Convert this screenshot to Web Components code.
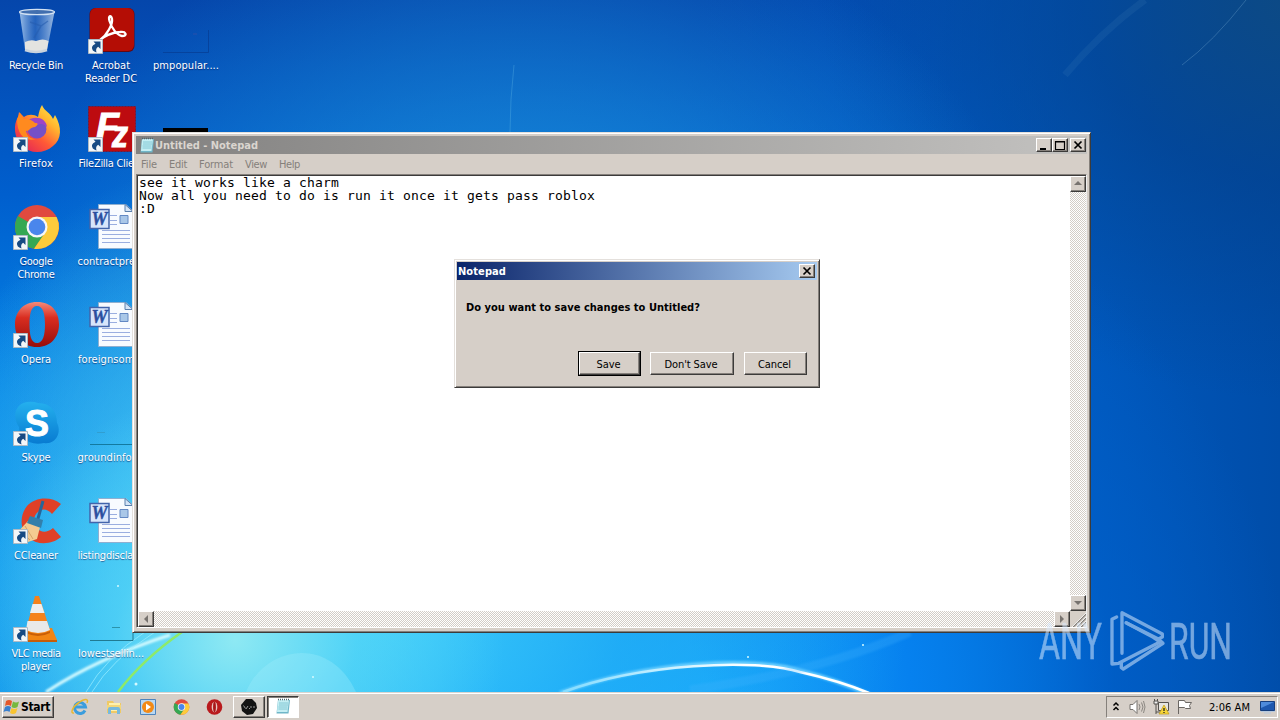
<!DOCTYPE html>
<html lang="en">
<head>
<meta charset="utf-8">
<title>Desktop</title>
<style>
    body {
        margin: 0;
        width: 1280px;
        height: 720px;
        overflow: hidden;
        position: relative;
        font: 11px/13px "DejaVu Sans Condensed", "DejaVu Sans", sans-serif;
        --face: #d6cfc8;
        --light: #fff;
        --shadow: #85807b;
        --dark: #3c3b3a;
    }
</style>
</head>
<body>
<desk-wallpaper></desk-wallpaper>
<desk-icons></desk-icons>
<note-window></note-window>
<save-dialog></save-dialog>
<any-run></any-run>
<task-bar></task-bar>

<script>
const ARROW = `<g class="arrow"><path d="M.5 31.5h14v14H.5z" fill="#f3f6f8" stroke="#aebac5"/>
    <path d="M5.500 33.500h7v7.500l-2.300-2.300q-3 1.500-1.700 5.800q-5-1.500-4.500-5.500q.5-2 3.500-3.300z" fill="#174a83"/></g>`;

const CHROME = `<circle cx="24" cy="24" r="22" fill="#e04a3f"/>
    <path d="M24 24L4.900 13A22 22 0 0 0 21 45.800L33 29z" fill="#35a853"/>
    <path d="M24 14h19.600A22 22 0 0 1 21 45.800L32.500 29z" fill="#fdcb3c"/>
    <circle cx="24" cy="24" r="10.500" fill="#f7f7f7"/><circle cx="24" cy="24" r="8.300" fill="#4a86ec"/>`;

const NOTE = `<path d="M3 2h12l-1.500 13.500H1.500z" fill="#6fb6c8"/><path d="M3 2h11l-1.500 12H2z" fill="#c4eef3"/>
    <path d="M4 5h9M4 7h9M3.500 9h9M3.500 11h9" stroke="#75bccb" stroke-width=".8"/>
    <path d="M3 1.500h12" stroke="#4d686f" stroke-width="1.500" stroke-dasharray="1 1"/>`;

const WORD = `<path d="M10.500.500H38l7 7V44.500H10.500z" fill="#f8fbff" stroke="#8fafd0"/>
    <path d="M37 .500v7h8z" fill="#d4e4f6" stroke="#5b80ad"/>
    <path d="M22 11.500h7M22 16.500h7M22 20.500h7M14 26.500h28M14 30.500h28M14 34.500h28M14 38.500h28" stroke="#9aaee0"/>
    <path d="M32 11.500h8v8h-8z" fill="#a9c7e8" stroke="#6388c3"/>
    <path d="M2 5.500h19v19H2z" fill="#d7e5fb" stroke="#4264ab" stroke-width="1.500"/>
    <text x="3.500" y="21" font-family="Liberation Serif, serif" font-weight="bold" font-style="italic" font-size="18" textLength="16" lengthAdjust="spacingAndGlyphs" fill="#2b4f9f" stroke="#2b4f9f" stroke-width=".4">W</text>`;

const OPERA = `<defs><linearGradient id="op" x2="0" y2="1"><stop stop-color="#f58a79"/><stop offset=".35" stop-color="#d92d20"/><stop offset="1" stop-color="#970d0b"/></linearGradient></defs>
    <path fill-rule="evenodd" d="M24 0C39 0 46 10 46 22.500S38 45 24 45S2 35 2 22.500S10 0 24 0zM24 4C18 4 16.500 12 16.500 22.500S18 41 24 41s8-8 8-18.500S30 4 24 4z" fill="url(#op)"/>`;

const ICONS = {
    bin: `<defs><linearGradient id="b"><stop stop-color="#b5d2f1" stop-opacity=".85"/><stop offset=".45" stop-color="#4c82cd" stop-opacity=".45"/><stop offset="1" stop-color="#c0d6ee" stop-opacity=".8"/></linearGradient></defs>
        <path d="M6.500 4L12 42q12 4.500 22 0L41.500 4z" fill="url(#b)"/>
        <path d="M12 34q6-3 11-1q7-3 12.500 0L34 42q-10 4.500-22 0z" fill="#e3e3e0"/>
        <path d="M12 42q11 4 22 0" stroke="#c9d3dd" stroke-width="2.500" fill="none"/>
        <ellipse cx="24" cy="4" rx="17.500" ry="2.700" fill="#426faf" stroke="#d3e2f3" stroke-width="1.300"/>
        <path d="M17 14l11 4-7 12M28 18l7-5" stroke="#275daf" stroke-width="1.500" fill="none" opacity=".6"/>`,
    acrobat: `<rect x="1.500" width="45" height="44" rx="6" fill="#620915"/><rect x="2" width="44" height="43" rx="6" fill="#b40d05"/>
        <path d="M12 32C19 27 25 16 24 11C23 6 20 8 21.500 13C24 21 29 27 34 28C40 28 38 23 32 24C24 24 15 29 12 32z" fill="none" stroke="#fff" stroke-width="2.300" stroke-linejoin="round"/>` + ARROW,
    firefox: `<defs><linearGradient id="ff" x1="1" y1="0" x2=".2" y2="1"><stop stop-color="#fff44f"/><stop offset=".35" stop-color="#ffb52e"/><stop offset=".65" stop-color="#ff5a36"/><stop offset="1" stop-color="#e22458"/></linearGradient></defs>
        <path d="M29-1c2 6 9 8 11 14l2-4c7 12 7 24-2 31c-9 8-23 8-31 0C1 32 0 19 5 11l1-5l5 5c4-3 10-3 14 0c1-5 2-9 4-12z" fill="url(#ff)"/>
        <circle cx="24" cy="23" r="9.500" fill="#7550c7"/><path d="M17 13c8-3 16 0 17 8c-4-4-8-4-12 0c-7 0-9 3-7 7c-7-5-5-12 2-15z" fill="#9e44c5"/>
        <path d="M4 13l3-6l4 6c4-1 8 1 11 4c4 0 3 2 0 4c-5 0-5 4-9 4c1 6 5 8 10 8C12 36 4 29 4 13z" fill="#ff8a1f"/>` + ARROW,
    filezilla: `<rect x=".5" y=".5" width="47" height="45" fill="#bd0b10" stroke="#7c1731" stroke-dasharray="2 1"/>
        <g fill="#fff" stroke="#fff" font-family="Liberation Sans, sans-serif" font-weight="bold" font-style="italic"><text x="8" y="33" font-size="37" textLength="23" lengthAdjust="spacingAndGlyphs">F</text><text x="24" y="41" font-size="36" textLength="16" lengthAdjust="spacingAndGlyphs">z</text></g>` + ARROW,
    chrome: `<g transform="translate(0 -1)">${CHROME}</g>` + ARROW,
    opera: OPERA + ARROW,
    skype: `<defs><linearGradient id="sk" x2="0" y2="1"><stop stop-color="#24b0ee"/><stop offset="1" stop-color="#087bd1"/></linearGradient></defs>
        <path d="M14 2q6-1 11 1c13 0 19 9 19 20c5 9-1 22-13 20C16 46 6 38 6 27C-1 16 2 4 14 2z" fill="url(#sk)"/>
        <text x="12" y="36" font-family="Liberation Sans, sans-serif" font-weight="bold" font-size="37" textLength="24" lengthAdjust="spacingAndGlyphs" fill="#fff" stroke="#fff">S</text>` + ARROW,
    ccleaner: `<path d="M48 6C38-2 22-1 14 8c-8 10-7 25 2 32c9 8 24 6 32-1l-8-9c-6 5-12 5-16 0c-5-6-3-13 1-16c4-4 10-3 14 2z" fill="#df4027"/>
        <path d="M15 23l12 6-3 12-9 3L1 38z" fill="#f4ca91"/><path d="M7 33l10 9M12 28l8 13" stroke="#d6a368"/>
        <path d="M30 3L24 24" stroke="#26669a" stroke-width="3"/><path d="M17 18l13 4-2 8-14-5z" fill="#337faa"/>` + ARROW,
    vlc: `<path d="M12 32h27l5 12H4z" fill="#f18514"/><path d="M4 44h40v2H4z" fill="#c65d08"/>
        <path d="M22 0h4l11 34q-12 7-24 0z" fill="#f5821b"/><path d="M19.500 8h9l3 9H17z" fill="#eee"/><path d="M14.500 25h19.500l3 9q-12 6-24 0z" fill="#e9e9e9"/><path d="M13 35q12 6 24 0v2q-12 6-24 0z" fill="#c95e07"/>` + ARROW,
    word: WORD,
    faint: `<path d="M0 44.500h45.500V22" fill="none" stroke="#053c92" opacity=".7"/><path d="M30 26h4" stroke="#51509f" opacity=".5"/>`,
    black: `<path d="M0 22h45v20H0z" fill="#000"/>`,
    line1: `<path d="M2 44.500h46" stroke="#137aa0"/><path d="M9 32.500h8" stroke="#3294be" opacity=".6"/>`,
    line2: `<path d="M2 44.500h43V30" stroke="#207a92" fill="none"/><path d="M24 31.500h8" stroke="#2b93ab"/>`
};

class DeskWallpaper extends HTMLElement {
    connectedCallback() {
        this.attachShadow({ mode: 'open' }).innerHTML = `
        <style>
            :host {
                position: absolute;
                inset: 0;
                background:
                    radial-gradient(ellipse 270px 250px at 235px 640px, #8ee9f3, #57d7f6b0 45%, #2fbcf700),
                    radial-gradient(ellipse 250px 330px at 190px 500px, #4fcdf5c0, #2fb8f300),
                    radial-gradient(ellipse 560px 400px at 350px 600px, #3bcafa 10%, #25b5f999 50%, #0a90f000),
                    radial-gradient(ellipse 520px 420px at 520px 320px, #2c9ee6, #1888d7b0 45%, #0c6fca00),
                    radial-gradient(ellipse 730px 620px at 560px 700px, #16a5fb 20%, #0681ef 48%, #0062ce90 76%, #005bc400),
                    radial-gradient(ellipse 480px 400px at 1300px 0, #0d4a84, #04408aa0 45%, #0040a000),
                    linear-gradient(90deg, #0048ac00 55%, #0058bd 85%, #004da9 100%),
                    linear-gradient(#0546ab, #005fce 27%, #0587e8 55%, #009ff6 80%, #00a6f9);
            }
            svg { display: block; }
        </style>
        <svg width="1280" height="720" fill="none">
            <defs><filter id="soft" x="-20%" y="-20%" width="140%" height="140%"><feGaussianBlur stdDeviation="1.200"/></filter>
            <linearGradient id="arc"><stop stop-color="#83dcff"/><stop offset=".6" stop-color="#fff"/><stop offset="1" stop-color="#fff"/></linearGradient></defs>
            <path d="M246 692C265 645 330 635 356 692z" fill="#a4f0fb" opacity=".3"/>
            <path d="M46 692Q98 658 170 635" stroke="#d5fbff" stroke-width="3" filter="url(#soft)"/>
            <path d="M86 692Q106 657 145 632M92 692Q111 660 155 632" stroke="#9deeff" opacity=".7"/>
            <path d="M118 692Q143 659 182 632" stroke="#8eea68" stroke-width="2.500"/>
            <path d="M560 693C650 660 760 656 805 672C830 678 852 687 870 695" stroke="#6acfff" stroke-width="4" filter="url(#soft)"/>
            <path d="M563 692C640 664 755 658 800 672Q840 681 869 693" stroke="url(#arc)" stroke-width="2.500"/>
            <path d="M690 690Q820 672 910 632" stroke="#47b5ff" stroke-width="9" opacity=".25" filter="url(#soft)"/>
            <path d="M1246 0Q1213 42 1182 65" stroke="#72a5cf" opacity=".35"/>
            <path d="M1145 0Q1103 30 1065 75" stroke="#5c91c4" stroke-width="7" opacity=".12"/>
            <path d="M514 65Q510 100 510 132" stroke="#6bc1e7" opacity=".3"/>
            <g fill="#d5faff"><circle cx="101" cy="560" r="1.300"/><circle cx="118" cy="586" r="1"/><circle cx="136" cy="684" r="1.500"/><circle cx="313" cy="677" r="1"/><circle cx="748" cy="657" r="1"/><circle cx="863" cy="645" r="1"/></g>
        </svg>`;
    }
}
customElements.define('desk-wallpaper', DeskWallpaper);


class DeskIcon extends HTMLElement {
    connectedCallback() {
        this.attachShadow({ mode: 'open' }).innerHTML = `
        <style>
            :host {
                display: flex;
                flex-direction: column;
                align-items: center;
                gap: 3px;
                padding-top: 8px;
                color: #fff;
                text-shadow: 0 1px 1px #0048;
            }
            svg { display: block; overflow: visible; flex: none; text-shadow: none; }
            div { padding-right: 2px; text-align: center; white-space: nowrap; }
        </style>
        <svg width="48" height="48">${ICONS[this.getAttribute('icon')]}</svg>
        <div><slot></slot></div>`;
    }
}
customElements.define('desk-icon', DeskIcon);


class DeskIcons extends HTMLElement {
    connectedCallback() {
        this.attachShadow({ mode: 'open' }).innerHTML = `
        <style>
            :host {
                position: relative;
                display: grid;
                grid-template-columns: repeat(3, 74px);
                grid-template-rows: repeat(7, 98px);
                grid-auto-flow: column;
                column-gap: 1px;
            }
        </style>
        <desk-icon icon="bin"><fit-text w="54">Recycle Bin</fit-text></desk-icon>
        <desk-icon icon="firefox"><fit-text w="34">Firefox</fit-text></desk-icon>
        <desk-icon icon="chrome"><fit-text w="33">Google</fit-text><br><fit-text w="37">Chrome</fit-text></desk-icon>
        <desk-icon icon="opera"><fit-text w="30">Opera</fit-text></desk-icon>
        <desk-icon icon="skype"><fit-text w="29">Skype</fit-text></desk-icon>
        <desk-icon icon="ccleaner"><fit-text w="44">CCleaner</fit-text></desk-icon>
        <desk-icon icon="vlc"><fit-text w="49">VLC media</fit-text><br><fit-text w="30">player</fit-text></desk-icon>
        <desk-icon icon="acrobat"><fit-text w="38">Acrobat</fit-text><br><fit-text w="52">Reader DC</fit-text></desk-icon>
        <desk-icon icon="filezilla"><fit-text w="65">FileZilla Client</fit-text></desk-icon>
        <desk-icon icon="word"><fit-text w="67">contractpre...</fit-text></desk-icon>
        <desk-icon icon="word"><fit-text w="66">foreignsom...</fit-text></desk-icon>
        <desk-icon icon="line1"><fit-text w="67">groundinfor...</fit-text></desk-icon>
        <desk-icon icon="word"><fit-text w="67">listingdisclai...</fit-text></desk-icon>
        <desk-icon icon="line2"><fit-text w="66">lowestsellin...</fit-text></desk-icon>
        <desk-icon icon="faint"><fit-text w="66">pmpopular....</fit-text></desk-icon>
        <desk-icon icon="black"></desk-icon>`;
    }
}
customElements.define('desk-icons', DeskIcons);


// Raised square button used in captions and scroll bars
class GlyphButton extends HTMLElement {
    connectedCallback() {
        const glyphs = {
            min: '<path d="M3 10h6" stroke-width="2"/>',
            max: '<path d="M2.500 2.500h9v8h-9zM2 3h10" stroke-width="1.200"/>',
            close: '<path d="M3.500 2.500l7 7M10.500 2.500l-7 7" stroke-width="1.700"/>',
            up: '<path d="M3 8h8L7 4z" fill="#77736f" stroke="none"/>',
            down: '<path d="M3 5h8L7 9z" fill="#77736f" stroke="none"/>',
            left: '<path d="M9 3v8L5 7z" fill="#77736f" stroke="none"/>',
            right: '<path d="M5 3v8l4-4z" fill="#77736f" stroke="none"/>'
        };
        this.attachShadow({ mode: 'open' }).innerHTML = `
        <style>
            :host {
                display: block;
                box-sizing: border-box;
                width: 16px;
                height: 14px;
                background: var(--face);
                border: 1px solid;
                border-color: var(--light) var(--dark) var(--dark) var(--light);
                box-shadow: inset -1px -1px var(--shadow);
            }
            svg { display: block; overflow: visible; }
        </style>
        <svg width="13" height="12" fill="none" stroke="#000">${glyphs[this.getAttribute('glyph')]}</svg>`;
    }
}
customElements.define('glyph-button', GlyphButton);


class NoteWindow extends HTMLElement {
    connectedCallback() {
        this.attachShadow({ mode: 'open' }).innerHTML = `
        <style>
            :host {
                position: absolute;
                left: 132px;
                top: 132px;
                width: 959px;
                height: 501px;
                box-sizing: border-box;
                display: flex;
                flex-direction: column;
                padding: 3px;
                background: var(--face);
                border: 1px solid;
                border-color: #e4e0dc var(--dark) var(--dark) #e4e0dc;
                box-shadow: inset 1px 1px #fff, inset -1px -1px var(--shadow);
            }
            .title {
                display: flex;
                align-items: center;
                height: 18px;
                padding: 0 1px 0 3px;
                background: linear-gradient(90deg, #828180, #c3c2c0);
                color: #dad5cf;
                font-weight: bold;
            }
            .buttons { display: flex; margin-left: auto; }
            .buttons glyph-button:last-child { margin-left: 2px; }
            .menu {
                display: flex;
                align-items: center;
                gap: 12px;
                height: 20px;
                padding: 0 0 0 5px;
                color: #85807b;
            }
            .edit {
                flex: 1;
                display: grid;
                grid-template-columns: 1fr 16px;
                grid-template-rows: 1fr 16px;
                background: #fff;
                border: 1px solid;
                border-color: var(--shadow) #eee var(--light) var(--shadow);
                box-shadow: inset 1px 1px var(--dark);
                padding: 1px 0 0 1px;
                margin-bottom: 1px;
            }
            .text {
                font: 13px/13px "DejaVu Sans Mono", monospace;
                padding-left: 1px;
            }
            .text fit-text { display: block; width: max-content; }
            .bar {
                display: flex;
                justify-content: space-between;
                background: repeating-conic-gradient(#fff 0 25%, #d3cdc6 0 50%) 0 0 / 2px 2px;
            }
            .bar glyph-button { height: 16px; }
            .v { flex-direction: column; }
            .grip { background: var(--face); }
        </style>
        <div class="title">
            <svg width="16" height="16">${NOTE}</svg>
            <fit-text w="103">Untitled - Notepad</fit-text>
            <div class="buttons"><glyph-button glyph="min"></glyph-button><glyph-button glyph="max"></glyph-button><glyph-button glyph="close"></glyph-button></div>
        </div>
        <div class="menu"><fit-text w="16">File</fit-text><fit-text w="18">Edit</fit-text><fit-text w="34">Format</fit-text><fit-text w="22">View</fit-text><fit-text w="21">Help</fit-text></div>
        <div class="edit">
            <div class="text">
                <fit-text w="200">see it works like a charm</fit-text>
                <fit-text w="456">Now all you need to do is run it once it gets pass roblox</fit-text>
                <fit-text w="16">:D</fit-text>
            </div>
            <div class="bar v"><glyph-button glyph="up"></glyph-button><glyph-button glyph="down"></glyph-button></div>
            <div class="bar"><glyph-button glyph="left"></glyph-button><glyph-button glyph="right"></glyph-button></div>
            <svg class="grip" width="16" height="16"><path d="M3 16L16 3M7 16l9-9M11 16l5-5" stroke="#85807b" stroke-width="1.500"/><path d="M2 16L16 2M6 16L16 6M10 16l6-6" stroke="#fff" stroke-width=".8"/></svg>
        </div>`;
    }
}
customElements.define('note-window', NoteWindow);


class PushButton extends HTMLElement {
    connectedCallback() {
        this.attachShadow({ mode: 'open' }).innerHTML = `
        <style>
            :host {
                display: flex;
                box-sizing: border-box;
                align-items: center;
                justify-content: center;
                height: 23px;
                padding: 1px 2px 0 0;
                border: 1px solid;
                border-color: var(--light) var(--dark) var(--dark) var(--light);
                box-shadow: inset -1px -1px var(--shadow);
            }
            :host([default]) {
                outline: 1px solid #000;
                outline-offset: 0;
            }
        </style>
        <slot></slot>`;
    }
}
customElements.define('push-button', PushButton);


class SaveDialog extends HTMLElement {
    connectedCallback() {
        this.attachShadow({ mode: 'open' }).innerHTML = `
        <style>
            :host {
                position: absolute;
                left: 454px;
                top: 259px;
                width: 366px;
                height: 129px;
                box-sizing: border-box;
                display: flex;
                flex-direction: column;
                padding: 2px;
                background: var(--face);
                border: 1px solid;
                border-color: #e4e0dc var(--dark) var(--dark) #e4e0dc;
                box-shadow: inset 1px 1px #fff, inset -1px -1px var(--shadow);
            }
            .title {
                display: flex;
                align-items: center;
                justify-content: space-between;
                height: 18px;
                padding: 0 2px 0 1px;
                background: linear-gradient(90deg, #0a246a, #a6caf0);
                color: #fff;
                font-weight: bold;
            }
            .message {
                padding: 21px 0 0 9px;
                font-weight: bold;
            }
            .buttons {
                display: flex;
                justify-content: flex-end;
                gap: 10px;
                margin-top: auto;
                padding: 0 10px 10px 0;
            }
        </style>
        <div class="title"><fit-text w="48">Notepad</fit-text><glyph-button glyph="close"></glyph-button></div>
        <div class="message"><fit-text w="234">Do you want to save changes to Untitled?</fit-text></div>
        <div class="buttons">
            <push-button default style="width:61px"><fit-text w="24">Save</fit-text></push-button>
            <push-button style="width:84px"><fit-text w="53">Don't Save</fit-text></push-button>
            <push-button style="width:63px"><fit-text w="33">Cancel</fit-text></push-button>
        </div>`;
    }
}
customElements.define('save-dialog', SaveDialog);


class AnyRun extends HTMLElement {
    connectedCallback() {
        this.attachShadow({ mode: 'open' }).innerHTML = `
        <style>
            :host { position: absolute; left: 1030px; top: 600px; opacity: .53; }
            svg { display: block; overflow: visible; }
        </style>
        <svg width="220" height="85" viewBox="1030 600 220 85" fill="#dcecff">
            <g font-family="Roboto, sans-serif" font-size="50" stroke="#dcecff" stroke-width=".5">
                <text x="1039" y="659" textLength="63" lengthAdjust="spacingAndGlyphs">ANY</text>
                <text x="1169" y="659" textLength="63" lengthAdjust="spacingAndGlyphs">RUN</text>
            </g>
            <g transform="translate(1000 590) scale(.3333)" fill="none" stroke="#dcecff" stroke-width="10" stroke-linejoin="round" stroke-linecap="round">
                <path d="M350 81l-14 7v134l20-2 124-64-20-14-82-44"/>
                <path d="M366 190V68l121 64v9l-12 6-95-48"/>
                <path d="M475 147l14 13-119 77-6-4v-13"/>
            </g>
        </svg>`;
    }
}
customElements.define('any-run', AnyRun);


class TaskBar extends HTMLElement {
    connectedCallback() {
        this.attachShadow({ mode: 'open' }).innerHTML = `
        <style>
            :host {
                position: absolute;
                left: 0;
                top: 692px;
                width: 1280px;
                height: 28px;
                box-sizing: border-box;
                display: flex;
                align-items: center;
                padding: 2px 2px 2px;
                background: var(--face);
                border-top: 1px solid #d9d5d0;
                box-shadow: inset 0 1px #fff;
            }
            svg { display: block; overflow: visible; flex: none; }
            .start, .task {
                box-sizing: border-box;
                display: flex;
                align-items: center;
                height: 22px;
                border: 1px solid;
                border-color: var(--light) var(--dark) var(--dark) var(--light);
                box-shadow: inset -1px -1px var(--shadow);
            }
            .start {
                width: 52px;
                gap: 1px;
                padding: 1px 0 0 1px;
                font-size: 12px;
                font-weight: bold;
            }
            .quick { display: flex; gap: 16px; margin: 0 10px 0 17px; }
            .task { width: 32px; justify-content: center; margin-right: 2px; }
            .task.on {
                background: #fff;
                border-color: var(--dark) var(--light) var(--light) var(--dark);
                box-shadow: inset 1px 1px var(--shadow);
            }
            .tray {
                display: flex;
                align-items: center;
                box-sizing: border-box;
                width: 172px;
                height: 22px;
                margin-left: auto;
                padding: 1px 0 0 5px;
                border: 1px solid;
                border-color: var(--shadow) var(--light) var(--light) var(--shadow);
            }
        </style>
        <div class="start">
            <svg width="16" height="16"><path d="M2 2q3-2 6 0L7 7Q4 5 1 7z" fill="#e4572a"/><path d="M9 2.500q3 2 6 0L13.500 8q-3 2-6 0z" fill="#76b83f"/><path d="M1 8q3-2 6 0l-1.500 5Q3 11-.5 13z" fill="#3a80ce"/><path d="M7.500 9q3 2 6 0L12 14q-3 2-6 0z" fill="#f8c431"/></svg>
            <fit-text w="29">Start</fit-text>
        </div>
        <div class="quick">
            <svg width="18" height="18"><path d="M14 12.500A5.500 5.500 0 1 1 14.500 9H5" fill="none" stroke="#3b9ddd" stroke-width="3"/><path d="M3 15C-1 16 1 9 8 4.500C14 0 18 1 16 5" fill="none" stroke="#e8b831" stroke-width="1.500"/></svg>
            <svg width="18" height="18"><path d="M2 3h6l1 2h7v10H2z" fill="#efc965"/><path d="M4 5h11v8H4z" fill="#fff1ad"/><path d="M2 7h14v4H2z" fill="#f4d779"/><path d="M3 16v-5q0-2 2-2h8q2 0 2 2v5h-3v-4H6v4z" fill="#78b9dd"/></svg>
            <svg width="18" height="18"><path d="M1.500 1.500h15v15h-15z" fill="#b9d8f2" stroke="#4d84bd"/><circle cx="9" cy="9" r="6" fill="#f28a17"/><path d="M7 5.500v7l5-3.500z" fill="#fff"/></svg>
            <svg width="17" height="18" viewBox="0 -1 48 50">${CHROME}</svg>
            <svg width="17" height="18" viewBox="0 -2 48 50"><circle cx="24" cy="23" r="22" fill="#b91a1d"/><ellipse cx="24" cy="23" rx="8" ry="15" fill="#e8c6c3"/><ellipse cx="24" cy="23" rx="4" ry="15" fill="#a81619"/></svg>
        </div>
        <div class="task"><svg width="18" height="18"><path d="M6 1h6l4 4 1 5-4 6-6 1-5-4-1-6z" fill="#131313"/><path d="M3.500 7.500l2 3M6 11l2-3M9 10.500h1M11 8v2M13 9h2" stroke="#a8a8a8" stroke-width=".9"/></svg></div>
        <div class="task on"><svg width="17" height="17">${NOTE}</svg></div>
        <div class="tray">
            <svg width="8" height="14"><path d="M1.500 5.500l2.500-2.500 2.500 2.500M1.500 10l2.500-2.500 2.500 2.500" fill="none" stroke="#000" stroke-width="1.500"/></svg>
            <svg width="17" height="16" style="margin-left:9px"><path d="M1 5.500h3l4-4v13l-4-4H1z" fill="#fff" stroke="#77736f"/><path d="M10 5q2 3 0 6M12.500 3.500q3 4.500 0 9M14.500 2q3 6 0 12" fill="none" stroke="#8b8782"/></svg>
            <svg width="17" height="16" style="margin-left:7px"><path d="M5.500 3.500h10v8h-10z" fill="#e6e5e0" stroke="#55524e"/><path d="M1 2h4v3H1zM3 5v10M3 13h6M1.500 0v2M4.500 0v2" fill="#eee" stroke="#55524e"/><path d="M11 6l5 9H6z" fill="#f7d63a" stroke="#c29b17" stroke-width=".7"/><path d="M11 9v3M11 13v1" stroke="#222" stroke-width="1.300"/></svg>
            <svg width="17" height="16" style="margin-left:7px"><path d="M1.500 15V1.500h6l1 2h6l-2 3 1 3h-5l-1-1h-6" fill="#fff" stroke="#6b6763"/></svg>
            <fit-text w="41" style="margin-left:15px">2:06 AM</fit-text>
            <svg width="16" height="16" style="margin-left:10px"><path d="M.5 2.500h14v9H.5z" fill="#1d58af" stroke="#173f7e"/><path d="M1 3h13L1 9z" fill="#4e8bdb"/><path d="M1 12.500h14M4 14h7" stroke="#b8c9dd"/></svg>
        </div>`;
    }
}
customElements.define('task-bar', TaskBar);


// Spaces its letters so that the text is w pixels wide
class FitText extends HTMLElement {
    connectedCallback() {
        this.attachShadow({ mode: 'open' }).innerHTML =
            '<style>:host { display: inline-block; white-space: nowrap; flex: none; }</style><slot></slot>';
        const n = this.textContent.length;
        const width = this.getBoundingClientRect().width;
        this.style.letterSpacing = (this.getAttribute('w') - width) / n + 'px';
    }
}
customElements.define('fit-text', FitText);
</script>
</body>
</html>
